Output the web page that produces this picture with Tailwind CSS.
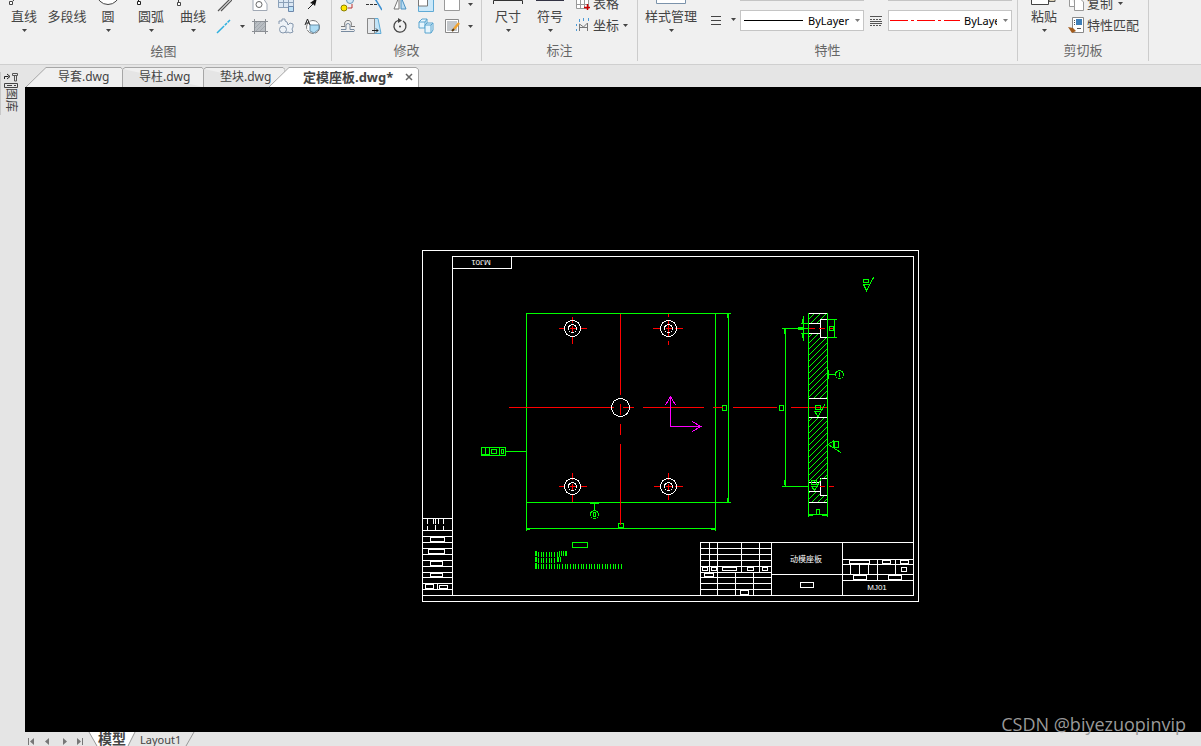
<!DOCTYPE html>
<html lang="zh-CN">
<head>
    <meta charset="UTF-8">
    <meta name="viewport" content="width=device-width, initial-scale=1.0">
    <title>定模座板.dwg</title>
    <script src="https://cdn.jsdelivr.net/npm/@tailwindcss/browser@4"></script>
</head>
<body class="h-screen flex flex-col overflow-hidden bg-[#e5e5e5] font-['Noto_Sans','Noto_Sans_CJK_SC',sans-serif] text-[13px] leading-4 text-[#444]">

<svg class="hidden">
    <symbol id="caret" viewBox="0 0 5 3"><path d="M0 0h5L2.500 3z" fill="#444"/></symbol>
</svg>

<!-- Ribbon -->
<header class="flex h-[65px] shrink-0 overflow-hidden border-b border-[#cfcfcf] bg-[#f0f0f0] whitespace-nowrap">
    <section class="flex w-[331px] flex-col">
        <div class="-mt-2 flex h-12 pl-1">
            <button class="flex w-10 flex-col items-center">
                <svg class="h-4 w-10" viewBox="0 0 40 16" fill="none" stroke="#444"><path d="M9 9L15 2" /><path d="M5.500 9.500h3v3h-3z" fill="#fff"/></svg>
                直线
                <span class="flex h-3 items-center"><svg class="h-[3px] w-[5px]"><use href="#caret"/></svg></span>
            </button>
            <button class="flex w-[46px] flex-col items-center pt-4">多段线</button>
            <button class="flex w-9 flex-col items-center">
                <svg class="h-4 w-6" viewBox="0 0 24 16"><circle cx="12" cy="1" r="11.500" fill="#fff" stroke="#444"/></svg>
                圆
                <span class="flex h-3 items-center"><svg class="h-[3px] w-[5px]"><use href="#caret"/></svg></span>
            </button>
            <button class="flex w-[50px] flex-col items-center">
                <svg class="h-4 w-10" viewBox="0 0 40 16" fill="none" stroke="#222"><path d="M7.500 9.500V5M6.500 9.500h3v3h-3z" fill="#fff"/></svg>
                圆弧
                <span class="flex h-3 items-center"><svg class="h-[3px] w-[5px]"><use href="#caret"/></svg></span>
            </button>
            <button class="flex w-[34px] flex-col items-center">
                <svg class="h-4 w-8" viewBox="0 0 32 16" fill="none" stroke="#444"><path d="M1.500 7v3M.500 10.500h3v3h-3z" fill="#fff"/></svg>
                曲线
                <span class="flex h-3 items-center"><svg class="h-[3px] w-[5px]"><use href="#caret"/></svg></span>
            </button>
            <div class="ml-1.5 grid grid-cols-[36px_26px_26px_26px] grid-rows-[24px_20px] items-center">
                <button aria-label="双线"><svg class="size-4" viewBox="0 0 16 16" fill="none" stroke="#555"><path d="M2 15L15 2M5 15L16 4" stroke-width="1.200"/></svg></button>
                <button aria-label="边界"><svg class="size-4" viewBox="0 0 16 16" fill="#fff" stroke="#a0a8b4"><path d="M1 14.500V2h10l4 6v6.500z"/><circle cx="7" cy="8.500" r="3" stroke="#666"/></svg></button>
                <button aria-label="表格块"><svg class="size-4" viewBox="0 0 16 16"><path d="M.500 0v11.500h15V0" fill="#dce8f4" stroke="#8aa0b8"/><path d="M0 6.500h16M5.500 4v7M10.500 4v7" stroke="#8aa0b8"/><path d="M10.500 10.500h5v5h-5z" fill="#bfe3f7" stroke="#6d87ab"/></svg></button>
                <button aria-label="引线"><svg class="size-4" viewBox="0 0 16 16"><path d="M4 13l6-6" stroke="#222"/><path d="M13 2l-2 8-2-2-3-1z" fill="#111"/></svg></button>
                <button class="flex items-center gap-2" aria-label="构造线"><svg class="size-4" viewBox="0 0 16 16" stroke="#2fb0df"><path d="M1 15L14 2" stroke-width="1.500" stroke-dasharray="10 1 3 1"/></svg><svg class="h-[3px] w-[5px]"><use href="#caret"/></svg></button>
                <button aria-label="填充"><svg class="size-4" viewBox="0 0 16 16"><path d="M2 3h12v11H2z" fill="#b8bdc2"/><path d="M2 7l4-4M2 11l8-8M3 14L14 3M7 14l7-7" stroke="#a2a8ae"/><path d="M2.500 1v15M0 3.500h16M13.500 1v15M0 13.500h16" stroke="#8b8f94" fill="none"/></svg></button>
                <button aria-label="面域"><svg class="size-4" viewBox="0 0 16 16" fill="#eef3f8" stroke="#8496ac"><path d="M1 6V3h3V1h3v2l2 1 1 3 2-2 3 1v3l-1 2 1 3-3 1-2-1-2 1-2-2"/><circle cx="5" cy="11.500" r="3.500"/></svg></button>
                <button aria-label="属性"><svg class="size-4" viewBox="0 0 16 16"><circle cx="9" cy="9" r="6.500" fill="#fff" stroke="#777" stroke-dasharray="8 1"/><path d="M6 7h9v4l-5 4-4-2z" fill="#addcf4" stroke="#6a8fa8"/><path d="M1 7L3.500 1 6 7M2 5h3" fill="none" stroke="#222"/></svg></button>
            </div>
        </div>
        <h2 class="h-[22px] text-center leading-[22px] text-[#666] -ml-1">绘图</h2>
    </section>

    <section class="flex h-[61px] w-[150px] flex-col border-l border-[#ccc]">
        <div class="-mt-2 grid h-12 grid-cols-[26px_26px_26px_26px_40px] grid-rows-[24px_20px] items-center pl-2">
            <button aria-label="复制"><svg class="size-4" viewBox="0 0 16 16"><circle cx="10" cy="4" r="3.500" fill="#cfe8f8" stroke="#6894b8"/><circle cx="4" cy="12" r="3" fill="#ffe800" stroke="#8c8000"/><path d="M8 12h4V8" fill="none" stroke="#b33"/></svg></button>
            <button aria-label="修剪"><svg class="size-4" viewBox="0 0 16 16" fill="none"><path d="M0 8.500h11" stroke="#333" stroke-dasharray="3 1"/><path d="M8 1l8 13" stroke="#3b8fd0" stroke-width="1.500"/></svg></button>
            <button aria-label="镜像"><svg class="size-4" viewBox="0 0 16 16"><path d="M7 1v12H2z" fill="#fff" stroke="#777"/><path d="M9 1v12h5z" fill="#b9dcf3" stroke="#4a90c0"/></svg></button>
            <button aria-label="缩放"><svg class="size-4" viewBox="0 0 16 16"><path d="M.500 0h15v15.500H.500z" fill="#cbe8f9" stroke="#5faad5"/><path d="M.500 1h9v9h-9z" fill="#fff" stroke="#777"/></svg></button>
            <button class="flex items-center gap-2" aria-label="选择"><svg class="size-4" viewBox="0 0 16 16"><path d="M.500 0v14.500h15V0" fill="#fff" stroke="#999"/></svg><svg class="h-[3px] w-[5px]"><use href="#caret"/></svg></button>
            <button aria-label="偏移"><svg class="size-4" viewBox="0 0 16 16" fill="none"><path d="M1 8.500h4C4 5 5 2.500 8 2.500S12 5 11 8.500h4" stroke="#777" /><path d="M1 13.500h13q1-1 0-2h-4V7.500a2 2 0 0 0-4 0v4H1" stroke="#788ba0"/></svg></button>
            <button aria-label="拉伸"><svg class="size-4" viewBox="0 0 16 16"><path d="M8 .500h4l3 15H8z" fill="#c3e4f7" stroke="#5faad5"/><path d="M1.500.500h7v15h-7z" fill="#e7e9eb" stroke="#888"/><path d="M6 12.500h6M10 10.500l2 2-2 2" stroke="#222" fill="none"/></svg></button>
            <button aria-label="旋转"><svg class="size-4" viewBox="0 0 16 16" fill="none" stroke="#444" stroke-width="1.300"><path d="M11 3A6 6 0 1 1 6 2.500"/><path d="M6 0l4 2.500L6 5z" fill="#444" stroke="none"/><circle cx="8" cy="8.500" r="1" fill="#444" stroke="none"/></svg></button>
            <button aria-label="阵列"><svg class="size-4" viewBox="0 0 16 16" fill="#e6f5fd" stroke="#58a4cf"><path d="M1 4l3-3h5v7l-2 2H1zM1 4h6v6M7 4l2-3"/><path d="M7 7l2-2h6v7l-2 3H7zM7 7h6v8M13 7l2-2"/></svg></button>
            <button class="flex items-center gap-2" aria-label="编辑填充"><svg class="size-4" viewBox="0 0 16 16"><path d="M1.500 1.500h13v13h-13z" fill="#fff" stroke="#888"/><path d="M3 3h10v10H3z" fill="#c3c7cb"/><path d="M10 11l5-6" stroke="#f2a22c" stroke-width="2.500"/><path d="M8 13l2-2" stroke="#5a3b12" stroke-width="2"/></svg><svg class="h-[3px] w-[5px]"><use href="#caret"/></svg></button>
        </div>
        <h2 class="h-[22px] text-center leading-[22px] text-[#666]">修改</h2>
    </section>

    <section class="flex h-[61px] w-[156px] flex-col border-l border-[#ccc]">
        <div class="-mt-2 flex h-12 pl-1.5">
            <button class="flex w-10 flex-col items-center">
                <svg class="h-4 w-8" viewBox="0 0 32 16" fill="none" stroke="#333"><path d="M1.500 12V8.500h29V12"/></svg>
                尺寸
                <span class="flex h-3 items-center"><svg class="h-[3px] w-[5px]"><use href="#caret"/></svg></span>
            </button>
            <button class="flex w-11 flex-col items-center">
                <svg class="h-4 w-7" viewBox="0 0 28 16"><path d="M0 7h28v2H0z" fill="#334"/></svg>
                符号
                <span class="flex h-3 items-center"><svg class="h-[3px] w-[5px]"><use href="#caret"/></svg></span>
            </button>
            <div class="ml-[3px] grid grid-rows-[22px_22px] items-center">
                <button class="flex items-center gap-0.5"><svg class="size-4" viewBox="0 0 16 16"><path d="M1.500 0v13.500h12V0M1 4.500h13M1 9.500h13M5.500 0v14M9.500 0v14" fill="#fff" stroke="#999"/><path d="M9 12.500h6M12.500 9v6" stroke="#c00" stroke-width="1.500"/></svg>表格</button>
                <button class="flex items-center gap-0.5"><svg class="size-4" viewBox="0 0 16 16" fill="none" stroke="#777"><path d="M4.500 14V7l4 3 4-4v8M5 10.500h7"/><path d="M4.500 2v3M8.500 1v3M13.500 1v3M1.500 7v2M1.500 12v2" stroke="#4a9bd8"/></svg>坐标<svg class="ml-0.5 h-[3px] w-[5px]"><use href="#caret"/></svg></button>
            </div>
        </div>
        <h2 class="h-[22px] text-center leading-[22px] text-[#666]">标注</h2>
    </section>

    <section class="flex h-[61px] w-[380px] flex-col border-l border-[#ccc]">
        <div class="-mt-2 flex h-12 pl-[5px]">
            <button class="flex w-14 flex-col items-center">
                <svg class="h-4 w-8" viewBox="0 0 32 16"><path d="M1.500 0v11.500h29V0" fill="#fff" stroke="#7b93ab"/></svg>
                样式管理
                <span class="flex h-3 items-center"><svg class="h-[3px] w-[5px]"><use href="#caret"/></svg></span>
            </button>
            <button class="ml-3 flex items-center gap-2.5 pt-2" aria-label="线宽">
                <svg class="h-2.5 w-2.5" viewBox="0 0 10 10" stroke="#444"><path d="M0 1.500h10M0 5.500h10M0 9.500h10" shape-rendering="crispEdges"/></svg>
                <svg class="h-[3px] w-[5px]"><use href="#caret"/></svg>
            </button>
            <div class="ml-1 flex w-[124px] flex-col gap-[9px]">
                <div class="h-[9px] border border-[#c5c5c5] bg-white"></div>
                <div class="relative">
                    <select aria-label="线型" class="h-[21px] w-full appearance-none overflow-hidden border border-[#c5c5c5] bg-white pl-[67px] pr-3 text-[11px] leading-[19px] text-black"><option>ByLayer</option></select>
                    <svg class="pointer-events-none absolute left-1 top-2.5 h-px w-[59px] bg-black"></svg>
                    <svg class="pointer-events-none absolute right-1 top-[9px] h-[3px] w-[5px] opacity-70"><use href="#caret"/></svg>
                </div>
            </div>
            <svg class="mx-1.5 mt-6 h-2.5 w-3" viewBox="0 0 12 10" stroke="#555" shape-rendering="crispEdges"><path d="M0 .500h12M0 7.500h12M0 5.500h12"/><path d="M0 3.500h12M0 9.500h12" stroke-dasharray="2 1"/></svg>
            <div class="flex w-[124px] flex-col gap-[9px]">
                <div class="h-[9px] border border-[#c5c5c5] bg-white"></div>
                <div class="relative">
                    <select aria-label="颜色线型" class="h-[21px] w-full appearance-none overflow-hidden border border-[#c5c5c5] bg-white pl-[75px] pr-3.5 text-[11px] leading-[19px] text-black"><option>ByLayer</option></select>
                    <svg class="pointer-events-none absolute left-0.5 top-2.5 h-px w-[70px]" viewBox="0 0 70 1"><path d="M0 .500h70" stroke="red" stroke-dasharray="18 3 3 3"/></svg>
                    <svg class="pointer-events-none absolute right-1 top-[9px] h-[3px] w-[5px] opacity-70"><use href="#caret"/></svg>
                </div>
            </div>
        </div>
        <h2 class="h-[22px] text-center leading-[22px] text-[#666]">特性</h2>
    </section>

    <section class="flex h-[61px] w-[132px] flex-col border-x border-[#ccc]">
        <div class="-mt-2 flex h-12 pl-1.5">
            <button class="flex w-10 flex-col items-center">
                <svg class="h-4 w-7" viewBox="0 0 28 16"><path d="M19 0v9.500h6V0" fill="#ddd2b4" stroke="#555"/><path d="M1.500 0v12.500h17V0" fill="#fff" stroke="#444"/></svg>
                粘贴
                <span class="flex h-3 items-center"><svg class="h-[3px] w-[5px]"><use href="#caret"/></svg></span>
            </button>
            <div class="ml-1 grid grid-rows-[22px_22px] items-center">
                <button class="flex items-center gap-[3px]"><svg class="size-4" viewBox="0 0 16 16" fill="#fff" stroke="#999"><path d="M1.500 0v11.500h6"/><path d="M6.500 3v12.500h9V7l-4-4z"/></svg>复制<svg class="ml-0.5 h-[3px] w-[5px]"><use href="#caret"/></svg></button>
                <button class="flex items-center gap-[3px]"><svg class="size-4" viewBox="0 0 16 16"><path d="M4.500.500h11v15h-11z" fill="#fff" stroke="#888"/><path d="M8 2h6v6H8z" fill="#3e7fb8"/><path d="M6 3.500h1M6 5.500h1M6 7.500h1M9 11.500h4" stroke="#555"/><path d="M0 10l5 1 3 3-4 2z" fill="#a35c1d"/></svg>特性匹配</button>
            </div>
        </div>
        <h2 class="h-[22px] text-center leading-[22px] text-[#666]">剪切板</h2>
    </section>
</header>

<div class="flex min-h-0 flex-1">
    <!-- Side palette -->
    <aside class="w-[25px] shrink-0 pt-[7px]">
        <button class="flex h-[43px] w-6 flex-col items-center border-l border-[#c8c8c8] pr-1">
            <svg class="h-4 w-3.5 shrink-0" viewBox="0 0 14 16" fill="none" stroke="#222"><path d="M.500 7V4.500h4M3 2l3 2.500L3 7" /><path d="M8.500 1.500h5v2h-5zM10.500 4v5h2V4" stroke="#555"/><path d="M.500 11.500h13v4H.500zM3 13.500h5M10 13.500h2" stroke="#444"/></svg>
            <span class="text-[12px] leading-[14px] [writing-mode:vertical-rl] [text-orientation:sideways]">图库</span>
        </button>
    </aside>

    <div class="flex min-w-0 flex-1 flex-col">
        <!-- File tabs -->
        <nav class="flex h-[22px] shrink-0 items-end whitespace-nowrap text-[12px] leading-5">
            <button class="relative h-5 w-[98px] pl-[33px] text-left">
                <svg class="absolute inset-0 h-full w-full" viewBox="0 0 98 20" fill="#f0f0f0" stroke="#a6a6a6"><path d="M1 20L21 .500h75l1.500 2V20"/></svg>
                <span class="relative">导套.dwg</span>
            </button>
            <button class="relative h-5 w-[81px] pl-4 text-left">
                <svg class="absolute inset-0 h-full w-full" viewBox="0 0 81 20" fill="#f0f0f0" stroke="#a6a6a6"><path d="M0 2l2-1.500h77l1.500 2V20"/></svg>
                <span class="relative">导柱.dwg</span>
            </button>
            <button class="relative h-5 w-[81px] pl-4 text-left">
                <svg class="absolute inset-0 h-full w-full" viewBox="0 0 81 20" fill="#f0f0f0" stroke="#a6a6a6"><path d="M0 2l2-1.500h77l2 2V20"/></svg>
                <span class="relative">垫块.dwg</span>
            </button>
            <div class="relative -ml-4 flex h-5 w-[150px] items-center pl-[34px] font-bold">
                <svg class="absolute inset-0 h-full w-full" viewBox="0 0 150 20" fill="#fff" stroke="#a6a6a6"><path d="M0 20L20 .500h127l2.500 2V20"/></svg>
                <button class="relative flex-1 text-left text-[13px]">定模座板.dwg*</button>
                <button class="relative mr-1.5" aria-label="关闭"><svg class="size-2" viewBox="0 0 8 8" stroke="#666" stroke-width="1.500"><path d="M1 1l6 6M7 1L1 7"/></svg></button>
            </div>
        </nav>

        <!-- Drawing area -->
        <main class="relative min-h-0 flex-1 bg-black">
            <svg class="h-full w-full" viewBox="25 87 1176 645" fill="none" shape-rendering="crispEdges">
                <defs>
                    <pattern id="hatch" width="6" height="6" patternUnits="userSpaceOnUse"><path d="M0 5h1v1H0zM1 4h1v1H1zM2 3h1v1H2zM3 2h1v1H3zM4 1h1v1H4zM5 0h1v1H5z" fill="#0f0"/></pattern>
                    <g id="hole" stroke="#fff"><circle cx="0" cy="0" r="8"/><circle cx="0" cy="0" r="4"/><path d="M-3 0h6M0-3v6" stroke="red"/></g>
                </defs>

                <!-- sheet frame -->
                <g stroke="#fff">
                    <path d="M422.500 250.500h496v351h-496zM452.500 256.500h461v339h-461zM452.500 268.500h59v-12M422.500 595.500h30"/>
                    <path d="M422 518.500h30M422 530.500h30M422 536.500h30M422 542.500h30M422 548.500h30M422 554.500h30M422 560.500h30M422 566.500h30M422 572.500h30M422 577.500h30M422 583.500h30M422 589.500h30"/>
                    <path d="M427.500 519v5M433.500 519v5M435.500 519v5M438.500 519v5M443.500 519v5M427.500 526v4M435.500 525v5M443.500 526v4M437.500 583v6"/>
                    <path d="M430.500 537.500h14v4h-14zM428.500 549.500h16v4h-16zM430.500 561.500h12v4h-12zM430.500 573.500h12v3h-12zM425.500 584.500h8v4h-8zM439.500 585.500h8v3h-8z"/>
                </g>

                <!-- title block -->
                <g stroke="#fff">
                    <path d="M913 542.500H700.500V595M771.500 542v53M842.500 542v53M771 574.500h142"/>
                    <path d="M700 548.500h71M700 554.500h71M700 560.500h71M700 566.500h71M700 572.500h71M700 577.500h71M700 583.500h71M700 589.500h71"/>
                    <path d="M709.500 542v30M717.500 542v53M741.500 542v30M759.500 542v30M735.500 572v23M753.500 572v23"/>
                    <path d="M842 559.500h71M842 564.500h71M842 580.500h71M850.500 564v10M859.500 564v10M868.500 564v10M877.500 559v21M895.500 559v15"/>
                    <path d="M702.500 567.500h5v3h-5zM711.500 567.500h5v3h-5zM722.500 567.500h14v3h-14zM747.500 567.500h6v3h-6zM762.500 567.500h5v3h-5zM704.500 573.500h9v3h-9zM740.500 590.500h8v4h-8z" fill="#000"/>
                    <path d="M800.500 582.500h13v5h-13zM849.500 560.500h20v3h-20zM882.500 560.500h8v3h-8zM900.500 560.500h8v3h-8zM853.500 575.500h13v4h-13zM888.500 575.500h13v4h-13zM901.500 567.500h5v4h-5z" fill="#000"/>
                </g>
                <g fill="#fff" text-anchor="middle" class="font-['Liberation_Sans_Narrow','Liberation_Sans','Noto_Sans_CJK_SC',sans-serif]">
                    <text x="806" y="562" font-size="8">动模座板</text>
                    <text x="877" y="590" font-size="8">MJ01</text>
                    <text x="481" y="266" font-size="8" transform="rotate(180 481 263)">MJ01</text>
                </g>

                <!-- plate -->
                <g stroke="#0f0">
                    <path d="M526.500 531V313.500H731M526 502.500h205M715.500 313v218M728.500 313v190M526 528.500h190"/>
                    <path d="M526 529.500h4M711 529.500h4M727.500 313v5M727.500 498v4"/>
                    <path d="M618.500 523.500h5v4h-5zM722.500 405.500h4v5h-4z"/>
                    <path d="M481.500 447.500h24v8h-24zM485.500 447v8M489.500 447v8M499.500 447v8M481 454.500h8M491.500 449.500h5v4h-5zM501.500 449.500h2v4h-2zM505 451.500h21"/>
                    <path d="M590 503.500h9M594.500 503v7M593.500 512.500h2v4h-2z"/><circle cx="594.500" cy="514.500" r="4"/>
                    <path d="M572.500 542.500h15v5h-15z"/>
                </g>

                <!-- technical notes -->
                <g stroke="#0f0">
                    <path d="M536 551v5M536 557v5M536 563v6M558 557v5" stroke-width="2"/>
                    <path d="M538 554h22M538 560h18M538 566.500h85" stroke-width="5" stroke-dasharray="1 2 1 1 1 2"/>
                    <path d="M559.500 551v5M561.500 551v5M563.500 551v5M565.500 551v5M566.500 551v5M560.500 557v5"/>
                </g>

                <!-- centre lines -->
                <g stroke="red">
                    <path d="M509 407.500h105M623 407.500h11M643 407.500h61M713 407.500h10M733 407.500h44M791 407.500h36"/>
                    <path d="M620.500 314v81M620.500 404v11M620.500 424v11M620.500 444v81"/>
                    <path d="M559 328.500h6M581 328.500h6M572.500 317v6M572.500 337v7M653 328.500h7M675 328.500h8M668.500 314v3M668.500 321v6M668.500 331v6M668.500 341v4"/>
                    <path d="M559 486.500h6M581 486.500h6M572.500 473v7M572.500 495v7M654 486.500h6M675 486.500h8M668.500 473v7M668.500 495v5"/>
                </g>
                <circle cx="620.500" cy="407.500" r="9" stroke="#fff"/>
                <use href="#hole" x="572.500" y="328.500"/>
                <use href="#hole" x="668.500" y="328.500"/>
                <use href="#hole" x="572.500" y="486.500"/>
                <use href="#hole" x="668.500" y="486.500"/>

                <!-- UCS icon -->
                <path d="M670.500 397v29.500H700M665.500 405l5-8.500 5 8.500M692 421.500l9 5-9 5" stroke="#f0f"/>

                <!-- section view -->
                <path d="M808 313h20v6h-8v4h-12zM808 333h12v4h8v61h-20zM808 417h20v61h-8v4h-12zM808 491h12v4h8v7h-20z" fill="url(#hatch)"/>
                <path d="M808 313.500h19M808 323.500h12M808 333.500h12M827 319.500h-6.500v18H827M808 398.500h19M808 417.500h19M808 482.500h12M808 491.500h12M827 478.500h-6.500v17H827M808 502.500h19" stroke="#fff"/>
                <path d="M809 328.500h6M819 328.500h6M829 328.500h4M820 486.500h5M829 486.500h5" stroke="red"/>
                <g stroke="#0f0">
                    <path d="M808.500 313v204M827.500 313v204M808 514.500h19M809 515.500h4M822 515.500h5M816.500 509.500h3v5h-3z"/>
                    <path d="M782 328.500h26M785.500 328v158M782 486.500h26M784.500 329v5M784.500 480v5M779.500 405.500h4v5h-4z" />
                    <path d="M803.500 316v25M801 323.500h7M801 333.500h7M802.500 319v4M802.500 333v5M798 327.500h5M798 329.500h5"/>
                    <path d="M827 319.500h10M827 337.500h10M834.500 319v18M829.500 326.500h4v4h-4z"/>
                    <path d="M828.500 370v9M828 374.500h7M839 372v5" /><circle cx="839.500" cy="374.500" r="4"/>
                    <path d="M863.500 279.500h5v3h-5zM863 284.500h7M863.500 284.500l3 6 7-13"/>
                    <path d="M815.500 405.500h5v4h-5zM814 411.500h7M814.500 411.500l3.500 5 7-12"/>
                    <path d="M833.500 441.500h5v6h-5zM828 444.500l6-4M828 444.500l13 8M834.500 441v7"/>
                    <path d="M811.500 480.500h5v4h-5zM811 486.500h7M811.500 486.500l3 4 7-12"/>
                </g>
            </svg>
            <div class="absolute -bottom-1 right-[15px] z-10 font-['Open_Sans',sans-serif] text-[18px] leading-6 text-[#999]">CSDN @biyezuopinvip</div>
        </main>

        <!-- Layout tabs -->
        <footer class="flex h-3.5 shrink-0 items-start whitespace-nowrap">
            <div class="flex gap-2 pl-[3px] pt-1.5">
                <button aria-label="第一个"><svg class="h-2 w-2" viewBox="0 0 8 8" fill="#777"><path d="M0 0h1v7H0zM6 0v7L2 3.500z"/></svg></button>
                <button aria-label="上一个"><svg class="h-2 w-2" viewBox="0 0 8 8" fill="#777"><path d="M5 0v7L1 3.500z"/></svg></button>
                <button aria-label="下一个"><svg class="h-2 w-2" viewBox="0 0 8 8" fill="#777"><path d="M3 0v7l4-3.500z"/></svg></button>
                <button aria-label="最后一个"><svg class="h-2 w-2" viewBox="0 0 8 8" fill="#777"><path d="M1 0v7l4-3.500zM6 0h1v7H6z"/></svg></button>
            </div>
            <button class="relative ml-1 h-3.5 w-[48px] text-[14px] leading-[14px] font-bold">
                <svg class="absolute inset-0 h-full w-full" viewBox="0 0 48 14"><path d="M1 0h46l-7 14H9z" fill="#fff"/><path d="M1 0l8 14M47 0l-7 14" stroke="#999"/></svg>
                <span class="relative">模型</span>
            </button>
            <button class="ml-1 text-[11px] leading-4">Layout1</button>
            <svg class="ml-1 h-3.5 w-2.5" viewBox="0 0 10 14"><path d="M9 0L1 14" stroke="#999"/></svg>
        </footer>
    </div>
</div>

</body>
</html>
